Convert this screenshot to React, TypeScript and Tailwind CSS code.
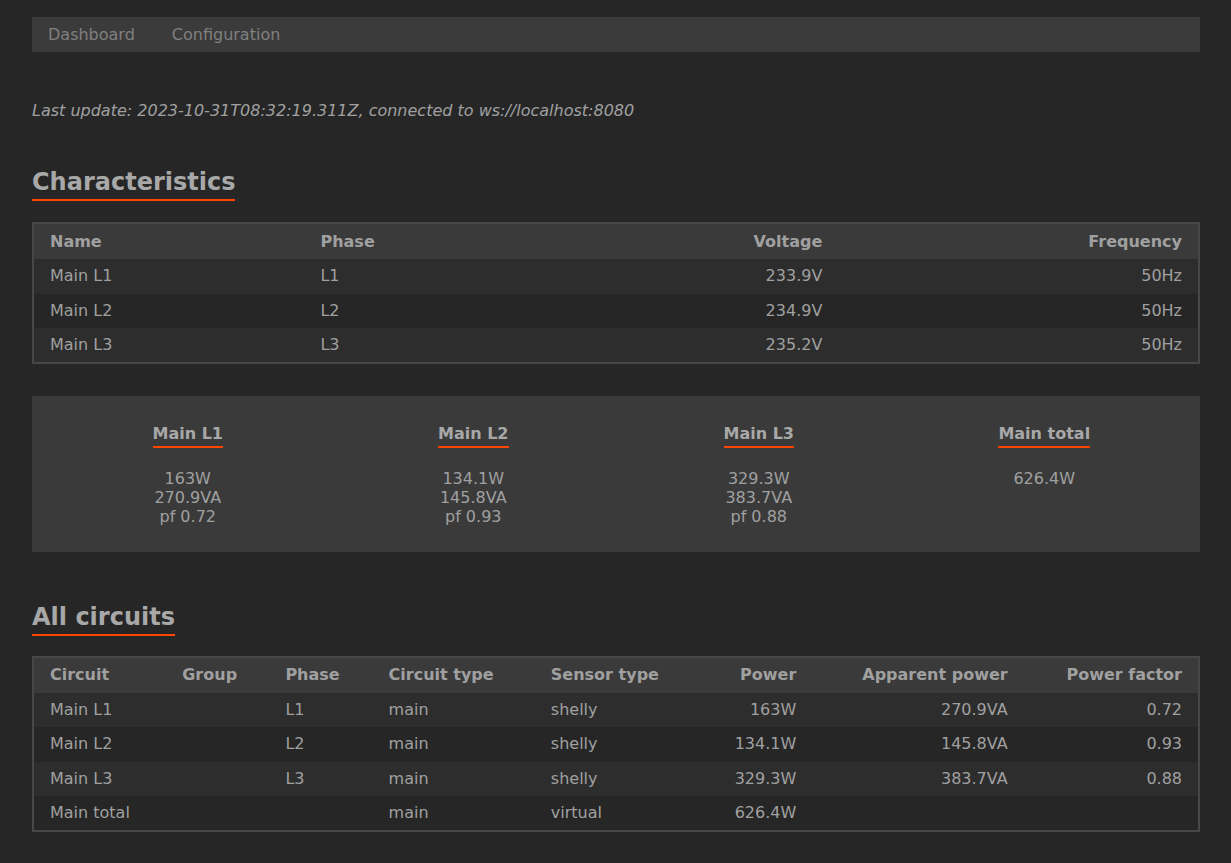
const characteristics = [
  { name: "Main L1", phase: "L1", voltage: "233.9V", frequency: "50Hz" },
  { name: "Main L2", phase: "L2", voltage: "234.9V", frequency: "50Hz" },
  { name: "Main L3", phase: "L3", voltage: "235.2V", frequency: "50Hz" },
];

const summaries = [
  { name: "Main L1", lines: ["163W", "270.9VA", "pf 0.72"] },
  { name: "Main L2", lines: ["134.1W", "145.8VA", "pf 0.93"] },
  { name: "Main L3", lines: ["329.3W", "383.7VA", "pf 0.88"] },
  { name: "Main total", lines: ["626.4W"] },
];

const circuits = [
  { circuit: "Main L1", group: "", phase: "L1", type: "main", sensor: "shelly", power: "163W", apparent: "270.9VA", pf: "0.72" },
  { circuit: "Main L2", group: "", phase: "L2", type: "main", sensor: "shelly", power: "134.1W", apparent: "145.8VA", pf: "0.93" },
  { circuit: "Main L3", group: "", phase: "L3", type: "main", sensor: "shelly", power: "329.3W", apparent: "383.7VA", pf: "0.88" },
  { circuit: "Main total", group: "", phase: "", type: "main", sensor: "virtual", power: "626.4W", apparent: "", pf: "" },
];

function Heading({ children }: { children: string }) {
  return (
    <h2 className="inline-block text-[24px] font-bold leading-[28px] text-[#a8a8a8] border-b-2 border-[#ff4500] pb-[3px]">
      {children}
    </h2>
  );
}

export default function App() {
  return (
    <div
      className="min-h-screen bg-[#262626] text-[#a0a0a0] text-[16px] pl-8 pr-[31px] pt-[17px] pb-8"
      style={{ fontFamily: '"DejaVu Sans", Verdana, sans-serif' }}
    >
      {/* Nav */}
      <nav className="flex bg-[#3b3b3b] h-[35px] items-center px-4 gap-[37px] text-[#808080]">
        <span>Dashboard</span>
        <span>Configuration</span>
      </nav>

      <p className="italic mt-[47px]">
        Last update: 2023-10-31T08:32:19.311Z, connected to ws://localhost:8080
      </p>

      <div className="mt-[45px]">
        <Heading>Characteristics</Heading>
      </div>

      <table className="mt-[21px] w-full table-fixed border-collapse border-2 border-[#474747]">
        <colgroup>
          <col className="w-[271px]" />
          <col className="w-[271px]" />
          <col className="w-[262px]" />
          <col className="w-[360px]" />
        </colgroup>
        <thead>
          <tr className="bg-[#3a3a3a] font-bold">
            <th className="text-left px-4 h-[36px]">Name</th>
            <th className="text-left px-4">Phase</th>
            <th className="text-right px-4">Voltage</th>
            <th className="text-right px-4">Frequency</th>
          </tr>
        </thead>
        <tbody>
          {characteristics.map((r, i) => (
            <tr key={r.name} className={i % 2 === 0 ? "bg-[#2d2d2d]" : "bg-[#262626]"}>
              <td className="px-4 h-[34.5px]">{r.name}</td>
              <td className="px-4">{r.phase}</td>
              <td className="px-4 text-right">{r.voltage}</td>
              <td className="px-4 text-right">{r.frequency}</td>
            </tr>
          ))}
        </tbody>
      </table>

      {/* Summary panel */}
      <div className="mt-[32px] bg-[#3a3a3a] h-[156px] px-[13px] pt-[28px] grid grid-cols-4">
        {summaries.map((s) => (
          <div key={s.name} className="flex flex-col items-center">
            <h3 className="font-bold leading-[19px] border-b-2 border-[#ff4500] pb-[3px] text-[#a8a8a8]">
              {s.name}
            </h3>
            <div className="mt-[21px] flex flex-col items-center leading-[19px]">
              {s.lines.map((l) => (
                <span key={l}>{l}</span>
              ))}
            </div>
          </div>
        ))}
      </div>

      <div className="mt-[51px]">
        <Heading>All circuits</Heading>
      </div>

      <table className="mt-[20px] w-full table-fixed border-collapse border-2 border-[#474747]">
        <colgroup>
          <col className="w-[133px]" />
          <col className="w-[103px]" />
          <col className="w-[103px]" />
          <col className="w-[162px]" />
          <col className="w-[155px]" />
          <col className="w-[122px]" />
          <col className="w-[211px]" />
          <col className="w-[175px]" />
        </colgroup>
        <thead>
          <tr className="bg-[#3a3a3a] font-bold">
            <th className="text-left px-4 h-[36px]">Circuit</th>
            <th className="text-left px-4">Group</th>
            <th className="text-left px-4">Phase</th>
            <th className="text-left px-4">Circuit type</th>
            <th className="text-left px-4">Sensor type</th>
            <th className="text-right px-4">Power</th>
            <th className="text-right px-4">Apparent power</th>
            <th className="text-right px-4">Power factor</th>
          </tr>
        </thead>
        <tbody>
          {circuits.map((r, i) => (
            <tr key={r.circuit} className={i % 2 === 0 ? "bg-[#2d2d2d]" : "bg-[#262626]"}>
              <td className="px-4 h-[34.5px]">{r.circuit}</td>
              <td className="px-4">{r.group}</td>
              <td className="px-4">{r.phase}</td>
              <td className="px-4">{r.type}</td>
              <td className="px-4">{r.sensor}</td>
              <td className="px-4 text-right">{r.power}</td>
              <td className="px-4 text-right">{r.apparent}</td>
              <td className="px-4 text-right">{r.pf}</td>
            </tr>
          ))}
        </tbody>
      </table>
    </div>
  );
}
